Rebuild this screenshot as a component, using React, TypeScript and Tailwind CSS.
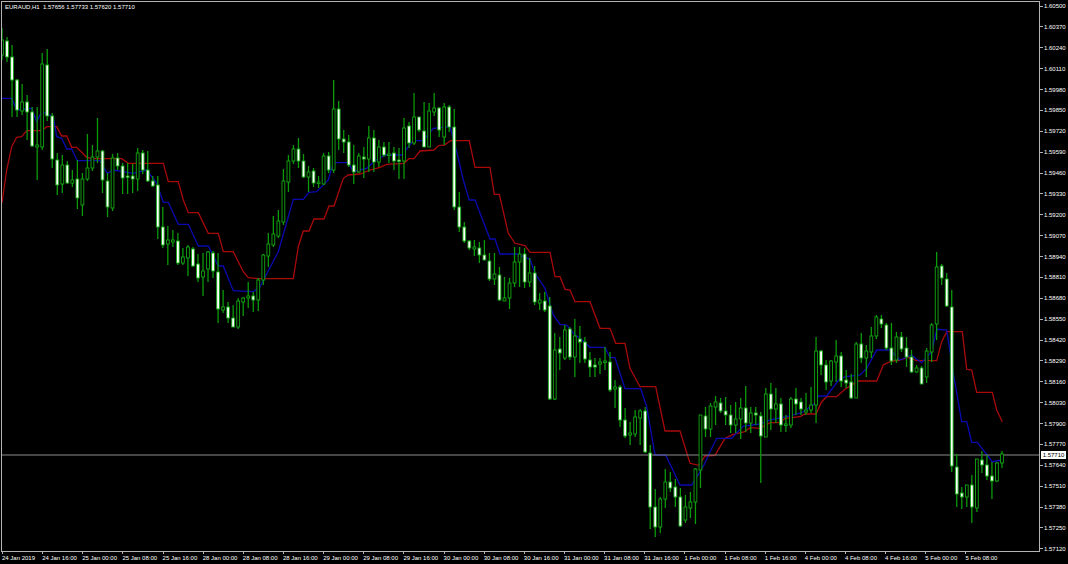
import React from 'react';

// high, low, body top, body bottom, 1 = bear (white) / 0 = bull (hollow)
const BARS: number[][] = [
  [28,60,40,55,0],[37,62,41,57,1],[45,117,57,80,1],[79,117,80,110,1],[84,115,102,111,0],
  [95,140,102,112,1],[107,147,112,146,1],[107,180,145,147,0],[53,150,64,147,0],[49,121,65,116,1],
  [113,168,116,159,1],[153,195,160,185,1],[155,193,165,184,0],[161,184,165,183,1],[170,187,180,183,0],
  [160,209,179,198,1],[173,216,179,205,0],[134,181,168,179,0],[145,171,157,168,0],[118,163,151,157,0],
  [150,193,151,180,1],[173,217,181,207,1],[154,211,158,208,0],[153,170,158,166,1],[163,194,166,178,1],
  [163,194,176,177,1],[164,193,176,179,1],[148,191,153,179,0],[150,174,153,170,1],[151,182,170,181,1],
  [176,187,181,186,1],[176,239,185,227,1],[207,248,227,245,1],[226,265,240,244,0],[230,247,240,242,0],
  [233,265,241,263,1],[248,265,257,263,0],[245,276,247,258,0],[247,267,249,266,1],[254,282,264,278,1],
  [253,296,271,277,0],[251,282,252,269,0],[251,278,253,271,1],[253,323,272,309,1],[290,313,307,310,0],
  [302,323,307,318,1],[305,327,318,327,1],[298,329,301,327,0],[297,316,298,302,0],[282,308,296,298,0],
  [292,312,296,300,1],[278,311,280,300,0],[254,285,255,280,0],[233,267,244,256,0],[216,247,234,245,0],
  [210,238,221,236,0],[169,225,181,222,0],[155,192,161,182,0],[145,164,149,161,0],[138,168,149,161,1],
  [154,178,161,177,1],[166,192,172,177,0],[168,187,171,183,1],[176,188,182,183,0],[153,185,156,184,0],
  [152,173,156,170,1],[80,173,109,170,0],[101,150,109,139,1],[130,153,139,142,1],[135,167,142,165,1],
  [145,184,165,172,1],[153,173,156,172,0],[147,178,157,159,1],[126,172,138,159,0],[130,172,138,162,1],
  [140,167,147,162,0],[142,157,147,155,1],[142,163,154,155,0],[147,170,153,161,1],[148,179,160,161,1],
  [118,179,128,161,0],[122,148,126,143,1],[93,145,117,143,0],[117,132,117,130,1],[102,147,131,147,1],
  [103,147,111,147,0],[93,116,108,112,0],[107,137,108,130,1],[103,145,107,137,0],[105,132,107,127,1],
  [109,210,127,207,1],[192,232,207,227,1],[222,243,227,241,1],[240,250,241,248,1],[240,256,247,249,0],
  [242,263,248,255,1],[240,260,255,260,1],[253,281,261,279,1],[253,285,274,279,0],[267,301,275,300,1],
  [277,301,298,301,0],[278,309,283,298,0],[247,287,262,283,0],[247,287,254,262,0],[248,288,254,282,1],
  [258,287,273,282,0],[266,305,273,302,1],[293,310,300,303,0],[292,312,301,310,1],[297,400,306,399,1],
  [333,400,350,399,0],[337,370,349,353,1],[325,360,330,358,0],[327,360,329,357,1],[319,377,336,357,0],
  [326,363,339,342,1],[337,363,342,359,1],[352,377,360,367,1],[358,377,365,367,1],[358,374,362,364,0],
  [347,370,361,362,0],[352,392,362,390,1],[380,408,387,389,0],[385,427,387,420,1],[408,438,420,436,1],
  [422,445,433,435,0],[410,437,417,434,0],[409,445,411,418,0],[407,453,411,452,1],[445,529,453,507,1],
  [489,537,507,527,1],[497,533,499,527,0],[469,508,482,499,0],[472,492,482,488,1],[479,507,487,497,1],
  [488,527,497,526,1],[495,523,507,520,0],[492,518,502,508,0],[468,524,469,502,0],[415,488,415,470,0],
  [407,437,416,429,1],[403,437,406,429,0],[396,425,402,407,0],[398,413,403,411,1],[397,425,411,415,1],
  [405,433,415,425,1],[402,433,419,425,0],[398,439,408,419,0],[386,432,408,423,1],[407,433,413,423,0],
  [407,425,413,415,1],[412,483,416,436,1],[388,437,394,437,0],[383,430,394,409,1],[388,423,404,409,0],
  [398,432,404,425,1],[415,432,424,425,0],[397,428,399,425,0],[388,415,399,404,1],[398,415,402,409,1],
  [393,415,410,412,0],[387,413,405,410,0],[337,423,351,405,0],[350,375,351,365,1],[360,390,365,382,1],
  [360,386,361,381,0],[340,382,356,362,0],[352,387,356,381,1],[370,388,380,383,1],[374,399,382,398,1],
  [342,398,344,398,0],[333,363,344,358,1],[345,377,351,358,0],[327,358,336,352,0],[315,339,317,336,0],
  [315,328,319,324,1],[323,350,325,348,1],[323,365,348,361,1],[332,363,337,360,0],[332,352,337,349,1],
  [337,367,348,357,1],[350,373,357,372,1],[365,373,368,372,0],[366,384,368,384,1],[348,383,351,377,0],
  [323,362,325,352,0],[252,340,267,324,0],[264,285,266,278,1],[273,307,279,306,1],[290,472,307,466,1],
  [454,507,467,494,1],[487,509,493,497,1],[485,507,485,497,0],[475,523,485,507,1],[459,512,459,508,0],
  [451,473,460,465,1],[455,480,465,476,1],[462,499,476,481,1],[462,482,463,481,0],[451,468,454,463,0],
];

// traced from crops of the reference, ox/oy = crop origin, values at 3x
const crop = (ox: number, oy: number, pts: number[][]) => pts.map(([x, y]) => [ox + x / 3, oy + y / 3]);

const RED = [
  ...crop(0, 0, [[6,608],[20,510],[35,440],[50,412],[65,410],[80,392],[125,392],[140,380],[170,380],[185,408],[200,408],[215,442],[230,442],[260,472],[275,476],[365,476],[385,490],[490,490],[505,545],[535,545],[550,600],[565,638],[595,638],[625,700],[655,700],[670,755],[700,755],[730,815],[745,833],[775,836]]),
  ...crop(260, 70, [[0,626],[100,626],[115,530],[130,483],[147,483],[162,447],[192,447],[207,408],[222,408],[250,325],[265,315],[300,312],[330,300],[360,292],[380,283],[432,280],[447,266],[462,266],[480,243],[522,240],[537,226],[552,226],[572,212],[628,212],[645,292],[690,292],[703,373],[718,373],[745,490]]),
  ...crop(500, 230, [[45,40],[75,47],[90,67],[150,67],[165,140],[180,140],[195,178],[210,180],[225,215],[270,215],[300,295],[330,295],[347,340],[375,340],[390,415],[420,470],[467,470],[495,603],[540,603],[570,700],[597,706]]),
  ...crop(690, 300, [[45,468],[75,466],[105,415],[130,403],[165,395],[180,383],[210,385],[240,368],[270,368],[285,355],[330,350],[345,342],[378,342],[395,305],[410,290],[440,290],[465,268],[505,243],[560,243],[580,195],[600,185]]),
  ...crop(900, 240, [[0,360],[25,352],[50,362],[110,362],[125,305],[140,275],[187,275],[200,388],[215,390],[230,457],[277,457],[290,510],[307,545]]),
];

const BLUE = [
  ...crop(0, 0, [[6,295],[35,295],[50,330],[95,325],[110,365],[125,335],[160,350],[170,410],[185,415],[200,447],[215,447],[232,482],[300,482],[322,520],[340,510],[400,520],[440,510],[470,550],[490,607],[505,607],[535,673],[565,673],[595,738],[625,738],[655,798],[670,798],[700,872],[760,875]]),
  ...crop(260, 70, [[0,650],[55,545],[100,388],[130,388],[147,367],[170,365],[205,330],[220,278],[265,278],[280,305],[300,300],[320,295],[345,272],[375,255],[425,255],[460,212],[490,212],[520,175],[570,170],[590,245],[610,330],[628,390],[645,390],[690,507],[705,507],[720,552]]),
  ...crop(500, 230, [[50,72],[90,88],[105,130],[135,175],[150,225],[160,255],[180,283],[200,285],[225,315],[240,325],[270,352],[315,352],[330,383],[345,383],[375,476],[422,476],[440,530],[465,675],[497,675],[540,765],[575,765],[597,730],[612,705],[630,665]]),
  ...crop(690, 300, [[80,415],[125,415],[160,378],[210,372],[240,360],[290,350],[335,338],[375,310],[385,288],[410,288],[450,235],[470,230],[510,225],[530,205],[560,150],[600,150]]),
  ...crop(900, 240, [[0,360],[35,345],[50,358],[65,368],[95,335],[110,268],[140,270],[160,400],[185,545],[200,545],[215,607],[232,607],[277,665],[307,660]]),
];

const PRICES = ['1.60500','1.60370','1.60240','1.60110','1.59980','1.59850','1.59720','1.59590','1.59460','1.59330','1.59200','1.59070','1.58940','1.58810','1.58680','1.58550','1.58420','1.58290','1.58160','1.58030','1.57900','1.57770','1.57640','1.57510','1.57380','1.57250','1.57120'];

const TIMES = ['24 Jan 2019','24 Jan 16:00','25 Jan 00:00','25 Jan 08:00','25 Jan 16:00','28 Jan 00:00','28 Jan 08:00','28 Jan 16:00','29 Jan 00:00','29 Jan 08:00','29 Jan 16:00','30 Jan 00:00','30 Jan 08:00','30 Jan 16:00','31 Jan 00:00','31 Jan 08:00','31 Jan 16:00','1 Feb 00:00','1 Feb 08:00','1 Feb 16:00','4 Feb 00:00','4 Feb 08:00','4 Feb 16:00','5 Feb 00:00','5 Feb 08:00'];

const toPoints = (pts: number[][]) => pts.map(([x, y]) => `${x.toFixed(1)},${y.toFixed(1)}`).join(' ');

function Chart() {
  return (
    <svg width={1037} height={549} viewBox="2 2 1037 549" className="block">
      <polyline points={toPoints(RED)} fill="none" stroke="#a80a0a" strokeWidth={1.3} />
      <polyline points={toPoints(BLUE)} fill="none" stroke="#0a0ab0" strokeWidth={1.3} />
      <line x1={2} x2={1039} y1={455} y2={455} stroke="#8c8c8c" strokeWidth={1} />
      {BARS.map(([high, low, top, bottom, bear], i) => {
        const x = 2 + i * 5.025;
        return (
          <g key={i}>
            <line x1={x} x2={x} y1={high} y2={low} stroke="#0a9a0a" strokeWidth={1.3} />
            <rect
              x={x - 1.4}
              y={top}
              width={2.8}
              height={Math.max(bottom - top, 1.5)}
              fill={bear ? '#ffffff' : '#000000'}
              stroke="#12a812"
              strokeWidth={0.9}
            />
          </g>
        );
      })}
    </svg>
  );
}

export default function App() {
  return (
    <div className="relative w-[1068px] h-[564px] bg-black overflow-hidden text-[6px] leading-[6px] text-white font-['Liberation_Sans',sans-serif]">
      <div className="flex h-[552px]">
        <div className="relative w-[1039px] h-[551px] ml-px mt-px border border-[#b4b4b4]">
          <Chart />
          <div className="absolute left-[3px] top-[2px] whitespace-pre">EURAUD,H1  1.57656 1.57733 1.57620 1.57710</div>
        </div>
        <div className="flex-1 flex flex-col justify-between pt-[3px]">
          {PRICES.map((p) => (
            <div key={p} className="flex items-center h-[6px]">
              <div className="w-[3px] h-px bg-[#b4b4b4]" />
              <span className="ml-[1px]">{p}</span>
            </div>
          ))}
        </div>
      </div>
      <div className="flex ml-[2px] h-[12px]">
        {TIMES.map((t) => (
          <div key={t} className="w-[40.15px] shrink-0 whitespace-nowrap">
            <div className="w-px h-[2px] bg-[#b4b4b4]" />
            <div className="mt-[1px]">{t}</div>
          </div>
        ))}
      </div>
      <div className="absolute left-[1041px] top-[451px] w-[25px] h-[8px] bg-white text-black flex items-center justify-center">1.57710</div>
    </div>
  );
}
